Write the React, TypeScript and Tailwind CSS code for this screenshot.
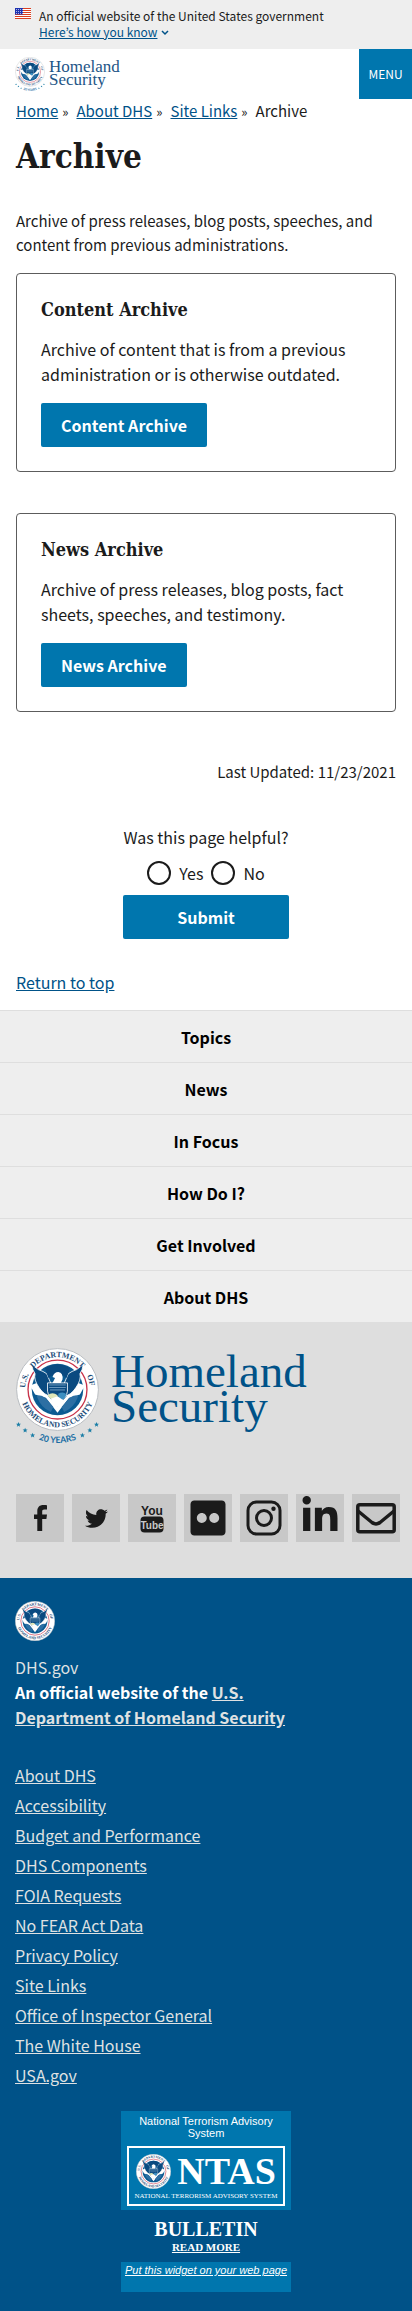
import { useId, type ReactNode } from "react";
import { FaFlickr, FaLinkedinIn, FaTwitter } from "react-icons/fa";

const sans = "font-['Noto_Sans_CJK_KR',sans-serif]";
const heading = "font-['DejaVu_Serif_Condensed','DejaVu_Serif',serif]";

function Seal({ className, years = false }: { className: string; years?: boolean }) {
  const id = useId();
  return (
    <svg viewBox={years ? "0 0 100 118" : "0 0 100 100"} className={className} role="img" aria-label="Department of Homeland Security seal">
      <defs>
        <path id={`${id}t`} d="M11 50A39 39 0 0 1 89 50" />
        <path id={`${id}b`} d="M4.500 50A45.500 45.500 0 0 0 95.500 50" />
        <path id={`${id}y`} d="M12 103Q50 126 88 103" />
      </defs>
      <circle cx="50" cy="50" r="49.300" fill="#fff" stroke="#b9bdc2" strokeWidth="1.200" />
      <circle cx="50" cy="50" r="35.500" fill="#fff" stroke="#c8334a" strokeWidth="1.600" />
      <circle cx="50" cy="50" r="31" fill="#0b5a92" />
      <path d="M17 45L28 41L40 50L39 58L50 70L61 58L60 50L72 41L83 45L77 56L64 60L50 78L36 60L23 56Z" fill="#fff" />
      <path d="M19 20L27 26Q33 28 37 31L43 45L42 58Q34 57 28 48Q21 38 23 31Q20 27 19 20Z" fill="#0a4a80" stroke="#fff" strokeWidth="1" />
      <path d="M81 20L73 26Q67 28 63 31L57 45L58 58Q66 57 72 48Q79 38 77 31Q80 27 81 20Z" fill="#0a4a80" stroke="#fff" strokeWidth="1" />
      <path d="M35 24Q50 15 65 24L61 36L57 33H43L39 36Z" fill="#0a4a80" />
      <path d="M44 35Q46 29 51 29Q57 30 56 38L54 42H44L47 36Z" fill="#fff" />
      <path d="M38 42H62V52Q61 61 50 66Q39 61 38 52Z" fill="#0a4a80" stroke="#fff" strokeWidth="1" />
      <path d="M40 44.500H60M40 47.500H60M41 50.500H59" stroke="#9fc3dd" strokeWidth="0.800" />
      <path d="M38 57Q44 52 50 57L50 65Q43 64 38 57Z" fill="#dfe6b8" />
      <path d="M51 55Q57 52 61 56L58 61L51 64Z" fill="#3c8fc1" />
      <path d="M42 61L50 58L57 63L54 70H46Z" fill="#fff" />
      <path d="M25 58Q31 55 38 63L45 71L42 77Q30 72 25 58Z" fill="#2d6fa3" />
      <path d="M75 58Q69 55 62 63L55 71L58 77Q70 72 75 58Z" fill="#2d6fa3" />
      <g fill="#1a4a78" fontFamily="Liberation Serif" fontWeight="700" fontSize="9.500">
        <text><textPath href={`#${id}t`} startOffset="2">U.S.</textPath></text>
        <text><textPath href={`#${id}t`} startOffset="50%" textAnchor="middle">DEPARTMENT</textPath></text>
        <text><textPath href={`#${id}t`} startOffset="105">OF</textPath></text>
        <text><textPath href={`#${id}b`} startOffset="50%" textAnchor="middle">HOMELAND SECURITY</textPath></text>
      </g>
      {years && (
        <>
          <g fill="#1b7ea6">
            {[[3, 92], [11, 99], [20, 105], [80, 105], [89, 99], [97, 92]].map(([x, y]) => (
              <path key={x} transform={`translate(${x} ${y})`} d="M0-3L.9-.9L3-.9L1.300.6L2 2.800L0 1.500L-2 2.800L-1.300.6L-3-.9L-.9-.9Z" />
            ))}
          </g>
          <text fill="#1c6ea4" fontFamily="Lato" fontWeight="700" fontSize="10.500">
            <textPath href={`#${id}y`} startOffset="50%" textAnchor="middle">20 YEARS</textPath>
          </text>
        </>
      )}
    </svg>
  );
}

function Flag() {
  return (
    <svg viewBox="0 0 16 11" className="mt-2 h-[11px] w-4 shrink-0" aria-hidden="true">
      <rect width="16" height="11" fill="#fff" />
      <path d="M0 .5H16M0 2.500H16M0 4.500H16M0 6.500H16M0 8.500H16M0 10.500H16" stroke="#db3e1f" strokeWidth="1" />
      <rect width="8" height="6.500" fill="#1e33b1" />
      <path d="M1 1.500H8M1 3.500H8M1 5.500H8" stroke="#fff" strokeWidth=".8" strokeDasharray=".8 1.200" />
    </svg>
  );
}

function ArchiveCard({ title, children, first = false }: { title: string; children: ReactNode; first?: boolean }) {
  return (
    <section className={`${first ? "mt-4" : "mt-[41px]"} rounded border border-[#5c5c5c] p-6`}>
      <h2 className={`${heading} text-[18px] leading-6 font-bold`}>{title}</h2>
      <p className="mt-[15px] text-[16px] leading-[25px]">{children}</p>
      <a href="#" className="mt-4 inline-flex h-11 items-center rounded-xs bg-[#0076ae] px-5 text-[16px] leading-4 font-bold text-white">
        {title}
      </a>
    </section>
  );
}

const crumbs = ["Home", "About DHS", "Site Links"];
const navItems = ["Topics", "News", "In Focus", "How Do I?", "Get Involved", "About DHS"];
const footerLinks = [
  "About DHS", "Accessibility", "Budget and Performance", "DHS Components", "FOIA Requests", "No FEAR Act Data",
  "Privacy Policy", "Site Links", "Office of Inspector General", "The White House", "USA.gov",
];

const social: { label: string; icon: ReactNode }[] = [
  {
    label: "Facebook",
    icon: (
      <svg viewBox="0 0 13 26" className="h-[26px] w-[13px]" fill="currentColor">
        <path d="M13 .2V4.500H10.400C8.600 4.500 8.200 5.300 8.200 6.600V9.400H13L12.400 14H8.200V26H3.300V14H0V9.400H3.300V6C3.300 2.100 5.700 0 9.300 0C11 0 12.500.1 13 .2Z" />
      </svg>
    ),
  },
  { label: "Twitter", icon: <FaTwitter className="size-[23px]" /> },
  {
    label: "YouTube",
    icon: (
      <svg viewBox="0 0 24 30" className="h-[30px] w-6" fontFamily="'Liberation Sans Narrow', 'Liberation Sans', sans-serif" fontWeight="700" textAnchor="middle">
        <text x="12" y="11.500" fontSize="12" fill="currentColor">You</text>
        <rect x="0.500" y="13.500" width="23" height="16" rx="4" fill="currentColor" />
        <text x="12" y="25.500" fontSize="10" fill="#c8c8c8">Tube</text>
      </svg>
    ),
  },
  { label: "Flickr", icon: <FaFlickr className="size-10" /> },
  {
    label: "Instagram",
    icon: (
      <svg viewBox="0 0 36 36" className="size-9" fill="none" stroke="currentColor" strokeWidth="3">
        <rect x="2" y="2" width="32" height="32" rx="8.500" />
        <circle cx="18" cy="18" r="7.500" />
        <circle cx="27.500" cy="8.800" r="2.200" fill="currentColor" stroke="none" />
      </svg>
    ),
  },
  { label: "LinkedIn", icon: <FaLinkedinIn className="mb-1 size-10" /> },
  {
    label: "Email",
    icon: (
      <svg viewBox="0 0 40 32" className="h-8 w-10" fill="none" stroke="currentColor" strokeWidth="3.500" strokeLinejoin="round">
        <rect x="1.800" y="2.800" width="36.400" height="27" rx="2" />
        <path d="M2 9L16 20.500Q20 23.500 24 20.500L38 9" />
      </svg>
    ),
  },
];

export default function App() {
  return (
    <div className={`${sans} bg-white text-[#1b1b1b]`}>
      <div className="flex gap-2 bg-[#eee] px-[15px] pb-[9px]">
        <Flag />
        <div className="pt-2 text-[12px] leading-4">
          <p>An official website of the United States government</p>
          <button type="button" className="flex items-center gap-1 text-[#005288]">
            <span className="underline">Here’s how you know</span>
            <svg viewBox="0 0 8 6" className="mt-0.5 h-1.5 w-2" fill="none" stroke="currentColor" strokeWidth="1.500">
              <path d="M1 1L4 4L7 1" />
            </svg>
          </button>
        </div>
      </div>

      <header className="flex items-start justify-between">
        <a href="#" className="mt-2 ml-[15px] flex items-start gap-1">
          <Seal years className="h-[35px] w-[30px]" />
          <span className="mt-[3px] font-['Liberation_Serif',serif] text-[17px] leading-[13px] text-[#1d5587]">
            Homeland
            <br />
            Security
          </span>
        </a>
        <button type="button" className="h-[50px] w-[53px] bg-[#0076ae] text-[12px] text-white">MENU</button>
      </header>

      <main className="px-4">
        <nav aria-label="Breadcrumb">
          <ol className="flex text-[15px] leading-6">
            {crumbs.map((c) => (
              <li key={c} className="mr-2">
                <a href="#" className="text-[#005288] underline">{c}</a>
                <span className="ml-1 text-[13px]">»</span>
              </li>
            ))}
            <li>Archive</li>
          </ol>
        </nav>
        <h1 className={`${heading} mt-[13px] text-[33px] leading-10 font-bold`}>Archive</h1>
        <p className="mt-8 text-[15px] leading-6">
          Archive of press releases, blog posts, speeches, and content from previous administrations.
        </p>
        <ArchiveCard title="Content Archive" first>
          Archive of content that is from a previous administration or is otherwise outdated.
        </ArchiveCard>
        <ArchiveCard title="News Archive">
          Archive of press releases, blog posts, fact sheets, speeches, and testimony.
        </ArchiveCard>
        <p className="mt-12 text-right text-[15px] leading-6">Last Updated: 11/23/2021</p>

        <form className="mt-[41px] flex flex-col items-center text-[16px] leading-6" onSubmit={(e) => e.preventDefault()}>
          <fieldset className="text-center">
            <legend className="w-full">Was this page helpful?</legend>
            <div className="mt-3 flex justify-center gap-2">
              {["Yes", "No"].map((v) => (
                <label key={v} className="flex items-center gap-2">
                  <input type="radio" name="helpful" value={v} className="size-6 appearance-none rounded-full border-2 border-[#1b1b1b] bg-white checked:border-[#0076ae] checked:bg-[#0076ae]" />
                  {v}
                </label>
              ))}
            </div>
          </fieldset>
          <button type="submit" className="mt-2.5 h-11 w-[166px] rounded-xs bg-[#0076ae] font-bold text-white">Submit</button>
        </form>
        <a href="#" className="mt-[31px] mb-4 inline-block text-[16px] leading-6 text-[#005288] underline">Return to top</a>
      </main>

      <footer>
        <nav aria-label="Footer" className="bg-[#eee]">
          {navItems.map((n) => (
            <a key={n} href="#" className="flex h-13 items-center justify-center border-t border-[#dedede] text-[16px] font-bold text-black">
              {n}
            </a>
          ))}
        </nav>

        <section className="bg-[#dedede] px-4 pt-[26px] pb-9">
          <div className="flex items-start gap-3">
            <Seal years className="h-[98px] w-[83px]" />
            <p className="mt-1.5 font-['Liberation_Serif',serif] text-[47px] leading-[35px] text-[#005288]">
              Homeland
              <br />
              Security
            </p>
          </div>
          <ul className="mt-12 flex gap-2">
            {social.map((s) => (
              <li key={s.label}>
                <a href="#" aria-label={s.label} className="flex size-12 items-center justify-center bg-[#c8c8c8] text-[#1b1b1b]">
                  {s.icon}
                </a>
              </li>
            ))}
          </ul>
        </section>

        <section className="bg-[#005288] px-[15px] pt-[23px] pb-5 text-[16px] text-[#dfe1e2]">
          <Seal className="size-10" />
          <p className="mt-[13px] leading-[26px]">DHS.gov</p>
          <p className="max-w-[290px] leading-[25px] font-bold text-white">
            An official website of the{" "}
            <a href="#" className="text-[#dfe1e2] underline">U.S. Department of Homeland Security</a>
          </p>
          <ul className="mt-[30px] leading-[30px]">
            {footerLinks.map((l) => (
              <li key={l}><a href="#" className="underline">{l}</a></li>
            ))}
          </ul>

          <div className="mt-[21px] flex flex-col items-center text-center text-white">
            <div className="w-[170px] bg-[#0076ae] px-[6px] pt-1 pb-1 font-['Liberation_Sans',sans-serif] text-[11px] leading-3">
              <p className="px-2">National Terrorism Advisory System</p>
              <a href="#" className="mt-[7px] flex flex-col items-center border-2 border-white pt-1.5 pb-1 font-['Liberation_Serif',serif]">
                <span className="flex items-center gap-1.5">
                  <Seal className="size-[35px]" />
                  <span className="text-[38px] leading-[35px] font-bold">NTAS</span>
                </span>
                <span className="mt-[3px] text-[7px] leading-2 whitespace-nowrap">NATIONAL TERRORISM ADVISORY SYSTEM</span>
              </a>
            </div>
            <p className="mt-2 font-['Liberation_Serif',serif] text-[20px] leading-[22px] font-bold">BULLETIN</p>
            <a href="#" className="font-['Liberation_Serif',serif] text-[11px] leading-[14px] font-bold underline">READ MORE</a>
            <div className="mt-2 h-[30px] w-[170px] bg-[#0076ae] pt-0.5">
              <a href="#" className="block font-['Liberation_Sans',sans-serif] text-[11px] leading-3 whitespace-nowrap italic underline">Put this widget on your web page</a>
            </div>
          </div>
        </section>
      </footer>
    </div>
  );
}
